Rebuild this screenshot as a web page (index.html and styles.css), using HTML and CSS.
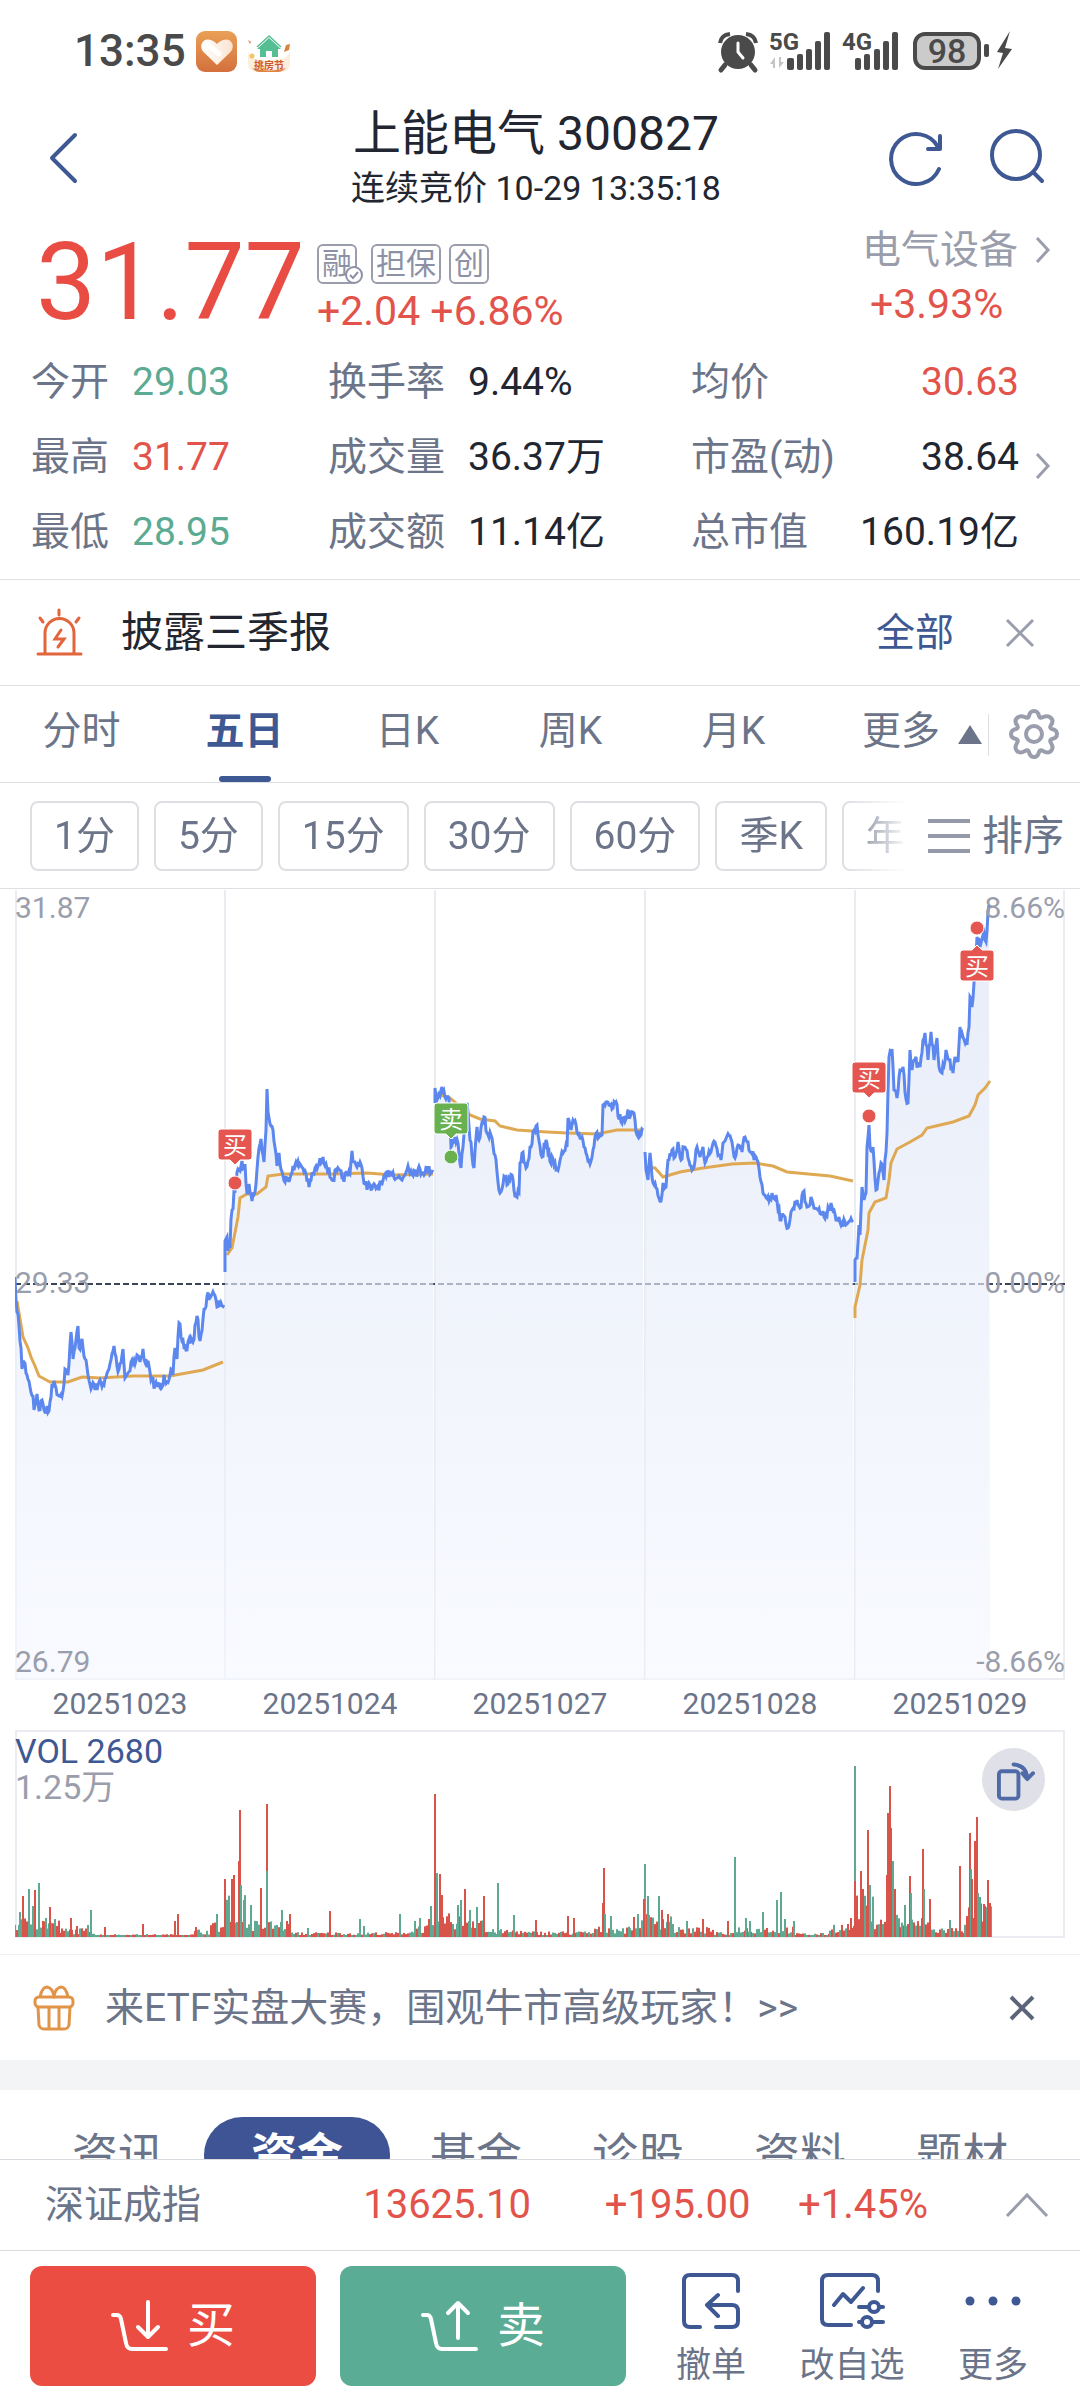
FILE: index.html
```html
<!DOCTYPE html>
<html lang="zh-CN">
<head>
    <meta charset="UTF-8">
    <meta name="viewport" content="width=device-width, initial-scale=1.0">
    <title>上能电气 300827</title>
    <link rel="stylesheet" href="styles.css">
</head>
<body>
    <!-- 状态栏 -->
    <div class="status-bar">
        <span class="clock">13:35</span>
        <svg class="app-icon" viewBox="0 0 42 42">
            <defs>
                <linearGradient id="orange" x1="0" y1="0" x2="0" y2="1">
                    <stop offset="0" stop-color="#e9a055"/>
                    <stop offset="1" stop-color="#d4703d"/>
                </linearGradient>
                <linearGradient id="heart" x1="0" y1="0" x2="1" y2="0">
                    <stop offset="0" stop-color="#fff"/>
                    <stop offset="1" stop-color="#fbe3cf"/>
                </linearGradient>
            </defs>
            <rect x="0" y="1" width="41" height="41" rx="9" fill="url(#orange)"/>
            <path d="M21 35 L7.500 22 C3 17 5.500 9.500 12 9.500 C16 9.500 19 12 21 14 C23 12 26 9.500 30 9.500 C36.500 9.500 39 17 34.500 22 Z" fill="url(#heart)"/>
            <path d="M11 14 L23 24" stroke="#fff" stroke-width="5" stroke-linecap="round"/>
        </svg>
        <svg class="app-icon house" viewBox="0 0 42 42">
            <path d="M0 22 Q3 29 12 30 L31 30 Q40 28 42 20 L42 33 Q42 42 32 42 L10 42 Q0 42 0 33 Z" fill="#fbeedd"/>
            <path d="M4 38 Q21 43 38 38 Q34 42 30 42 L11 42 Q8 42 4 38 Z" fill="#df8543"/>
            <path d="M21 8 L33 19 L30 19 L30 27 L24 27 L24 21 L18 21 L18 27 L12 27 L12 19 L9 19 Z" fill="#55bf93"/>
            <path d="M9 17 L21 6 L33 17" fill="none" stroke="#55bf93" stroke-width="1.500"/>
            <path d="M36 22 L38 15 L42 14 L41 20 Z" fill="#d8833e"/>
            <path d="M0 10 L3 12 L2 14 Z" fill="#e07b51"/>
            <circle cx="4" cy="26" r="2.500" fill="#f2c568"/>
            <text x="21" y="39" text-anchor="middle" class="house-text">挑房节</text>
        </svg>
        <svg class="status-icons" viewBox="0 0 300 46" fill="#4a4a4a">
            <!-- 闹钟 -->
            <circle cx="22" cy="24" r="17"/>
            <path d="M9 37 L5 42 M35 37 L39 42" stroke="#4a4a4a" stroke-width="5" stroke-linecap="round"/>
            <path d="M4 15 Q5 7 14 6 M40 15 Q39 7 30 6" stroke="#4a4a4a" stroke-width="4" fill="none"/>
            <path d="M22 15 L22 24 L27 30" stroke="#fff" stroke-width="3" fill="none" stroke-linecap="round"/>
            <!-- 信号 -->
            <text x="53" y="22" class="net">5G</text>
            <path d="M54 36 L59 29 L59 40 L57 40 L57 36 Z M68 34 L63 40 L63 29 L65 29 L65 34 Z" fill="#c4c4c4"/>
            <rect x="71" y="30" width="7" height="12" rx="2"/>
            <rect x="81" y="26" width="6" height="16" rx="2"/>
            <rect x="90" y="21" width="6" height="21" rx="2"/>
            <rect x="99" y="13" width="6" height="29" rx="2"/>
            <rect x="108" y="4" width="6" height="38" rx="2"/>
            <text x="126" y="22" class="net">4G</text>
            <rect x="139" y="30" width="6" height="12" rx="2"/>
            <rect x="148" y="26" width="6" height="16" rx="2"/>
            <rect x="158" y="21" width="6" height="21" rx="2"/>
            <rect x="167" y="13" width="6" height="29" rx="2"/>
            <rect x="176" y="4" width="6" height="38" rx="2"/>
            <!-- 电池 -->
            <rect x="199" y="6" width="64" height="34" rx="10" fill="#cbcbcb" stroke="#4a4a4a" stroke-width="4"/>
            <rect x="268" y="16" width="5" height="13" rx="2"/>
            <text x="231" y="35" text-anchor="middle" class="battery">98</text>
            <path d="M294 3 L281 24 L287 25 L282 41 L296 21 L289 20 Z"/>
        </svg>
    </div>

    <!-- 标题 -->
    <header class="header">
        <button class="icon-btn" aria-label="返回">
            <svg width="30" height="52" viewBox="0 0 30 52" class="line-blue" stroke-width="4"><path d="M27 3 L4 26 L27 49"/></svg>
        </button>
        <div class="title">
            <h1>上能电气 300827</h1>
            <p>连续竞价 10-29 13:35:18</p>
        </div>
        <div class="header-actions">
            <button class="icon-btn" aria-label="刷新">
                <svg width="56" height="58" viewBox="0 0 56 58" class="line-blue" stroke-width="4"><path d="M51 40 A25 25 0 1 1 50 18 M52 7 L52 20 L40 20"/></svg>
            </button>
            <button class="icon-btn" aria-label="搜索">
                <svg width="58" height="60" viewBox="0 0 58 60" class="line-blue" stroke-width="4"><circle cx="28" cy="27" r="24"/><path d="M46 45 L54 53"/></svg>
            </button>
        </div>
    </header>

    <main class="content">
        <!-- 行情 -->
        <section class="quote">
            <div class="price">31.77</div>
            <div class="change">
                <div class="tags">
                    <span class="tag">融<svg class="tag-check" viewBox="0 0 18 18"><circle cx="9" cy="9" r="8" fill="#fff" stroke="#8d91a5" stroke-width="2"/><path d="M5 9 L8 12 L13 6" fill="none" stroke="#8d91a5" stroke-width="2"/></svg></span>
                    <span class="tag">担保</span>
                    <span class="tag">创</span>
                </div>
                <div class="rate red">+2.04 +6.86%</div>
            </div>
            <a class="sector" href="#">
                <span class="sector-name">电气设备</span>
                <svg class="chevron" width="18" height="30" viewBox="0 0 18 30"><path d="M3 3 L14 15 L3 27"/></svg>
                <span class="sector-rate rate red">+3.93%</span>
            </a>
        </section>

        <section class="stats-wrap">
            <dl class="stats">
                <div><dt>今开</dt><dd class="green">29.03</dd></div>
                <div class="wide"><dt>换手率</dt><dd>9.44%</dd></div>
                <div class="spread"><dt>均价</dt><dd class="red">30.63</dd></div>
                <div><dt>最高</dt><dd class="red">31.77</dd></div>
                <div class="wide"><dt>成交量</dt><dd>36.37万</dd></div>
                <div class="spread"><dt>市盈(动)</dt><dd>38.64</dd></div>
                <div><dt>最低</dt><dd class="green">28.95</dd></div>
                <div class="wide"><dt>成交额</dt><dd>11.14亿</dd></div>
                <div class="spread"><dt>总市值</dt><dd>160.19亿</dd></div>
            </dl>
            <svg class="chevron" width="18" height="30" viewBox="0 0 18 30"><path d="M3 3 L14 15 L3 27"/></svg>
        </section>

        <!-- 公告 -->
        <section class="notice">
            <svg width="48" height="50" viewBox="0 0 48 50" fill="none" stroke="#e2653c" stroke-width="3" stroke-linecap="round">
                <path d="M2 46 L45 46 M9 45 L9 25 A14.500 14.500 0 0 1 38 25 L38 45 M23 2 L23 7 M4 10 L7 14 M43 10 L40 14"/>
                <path d="M25 22 L19 31 L28 31 L22 39"/>
            </svg>
            <span class="notice-text">披露三季报</span>
            <a href="#" class="all">全部</a>
            <button class="icon-btn" aria-label="关闭公告">
                <svg width="32" height="32" viewBox="0 0 32 32" fill="none" stroke="#9a9eac" stroke-width="3"><path d="M3 3 L29 29 M29 3 L3 29"/></svg>
            </button>
        </section>

        <!-- 周期 -->
        <nav class="period">
            <button>分时</button>
            <button class="active">五日</button>
            <button>日K</button>
            <button>周K</button>
            <button>月K</button>
            <button class="more">更多<span class="triangle"></span></button>
            <button class="gear" aria-label="设置">
                <svg width="52" height="52" viewBox="0 0 52 52" fill="none" stroke="#9a9eac" stroke-width="4" stroke-linejoin="round">
                    <path d="M21 8 Q22 3 26 3 Q30 3 31 8 Q32 11 35 9 Q40 7 43 10 Q46 13 43 17 Q41 20 44 21 Q49 22 49 26 Q49 30 44 31 Q41 32 43 35 Q46 40 43 43 Q40 46 35 43 Q32 41 31 44 Q30 49 26 49 Q22 49 21 44 Q20 41 17 43 Q12 46 9 43 Q6 40 9 35 Q11 32 8 31 Q3 30 3 26 Q3 22 8 21 Q11 20 9 17 Q6 13 9 10 Q12 7 17 9 Q20 11 21 8 Z"/>
                    <circle cx="26" cy="26" r="8"/>
                </svg>
            </button>
        </nav>

        <div class="minutes">
            <div class="chips">
                <button>1分</button>
                <button>5分</button>
                <button>15分</button>
                <button>30分</button>
                <button>60分</button>
                <button>季K</button>
                <button>年K</button>
            </div>
            <button class="sort"><span class="bars"></span>排序</button>
        </div>

        <!-- 走势图 -->
        <section class="charts">
            <div class="chart">
                <svg id="priceChart" viewBox="0 0 1050 790" preserveAspectRatio="none">
                    <defs>
                        <linearGradient id="area" gradientUnits="userSpaceOnUse" x1="0" y1="0" x2="0" y2="790">
                            <stop offset="0" stop-color="#dbe2f4"/>
                            <stop offset="1" stop-color="#f5f8ff"/>
                        </linearGradient>
                    </defs>
                    <path class="grid" d="M1 0 V789 H1049 V0 M210 0 V789 M420 0 V789 M630 0 V789 M840 0 V789"/>
                    <path class="zero" d="M0 394 H1050"/>
                    <g id="lines"></g>
                    <g class="mark buy">
                        <path d="M206 239 H234 Q237 239 237 242 V267 Q237 270 234 270 H225 L220 275 L215 270 H206 Q203 270 203 267 V242 Q203 239 206 239 Z"/>
                        <circle cx="220" cy="293" r="7"/>
                        <text x="220" y="264">买</text>
                    </g>
                    <g class="mark sell">
                        <path d="M422 213 H450 Q453 213 453 216 V241 Q453 244 450 244 H441 L436 249 L431 244 H422 Q419 244 419 241 V216 Q419 213 422 213 Z"/>
                        <circle cx="436" cy="267" r="7"/>
                        <text x="436" y="238">卖</text>
                    </g>
                    <g class="mark buy">
                        <path d="M840 172 H868 Q871 172 871 175 V200 Q871 203 868 203 H859 L854 208 L849 203 H840 Q837 203 837 200 V175 Q837 172 840 172 Z"/>
                        <circle cx="854" cy="226" r="7"/>
                        <text x="854" y="197">买</text>
                    </g>
                    <g class="mark buy">
                        <path d="M948 60 H957 L962 55 L967 60 H976 Q979 60 979 63 V88 Q979 91 976 91 H948 Q945 91 945 88 V63 Q945 60 948 60 Z"/>
                        <circle cx="962" cy="38" r="7"/>
                        <text x="962" y="85">买</text>
                    </g>
                </svg>
                <span class="axis top left">31.87</span>
                <span class="axis top right">8.66%</span>
                <span class="axis mid left">29.33</span>
                <span class="axis mid right">0.00%</span>
                <span class="axis bottom left">26.79</span>
                <span class="axis bottom right">-8.66%</span>
            </div>
            <div class="dates">
                <span>20251023</span>
                <span>20251024</span>
                <span>20251027</span>
                <span>20251028</span>
                <span>20251029</span>
            </div>
            <div class="volume">
                <svg id="volumeChart" viewBox="0 0 1050 208" preserveAspectRatio="none">
                    <path class="grid" d="M1 1 H1049 V207 H1 Z"/>
                </svg>
                <div class="vol-label"><span class="blue">VOL 2680</span><br>1.25万</div>
                <button class="rotate" aria-label="横屏">
                    <svg width="40" height="42" viewBox="0 0 40 42" fill="none" stroke="#4f6aa6" stroke-width="4" stroke-linecap="round" stroke-linejoin="round">
                        <rect x="3" y="10" width="20" height="28" rx="3"/>
                        <path d="M18 3 Q31 4 32 17 M27 12 L32 18 L38 12"/>
                    </svg>
                </button>
            </div>
        </section>

        <!-- 活动 -->
        <section class="promo">
            <svg width="42" height="46" viewBox="0 0 42 46" fill="none" stroke="#e19447" stroke-width="3" stroke-linejoin="round">
                <rect x="2" y="12" width="38" height="10" rx="4"/>
                <path d="M5 22 L6 40 Q7 44 11 44 L31 44 Q35 44 36 40 L37 22 M16 23 V43 M26 23 V43 M7 12 Q9 2 14 2 Q20 3 21 12 Q22 3 28 2 Q33 2 35 12"/>
            </svg>
            <a href="#" class="promo-text">来ETF实盘大赛，围观牛市高级玩家！&gt;&gt;</a>
            <button class="icon-btn" aria-label="关闭活动">
                <svg width="28" height="28" viewBox="0 0 28 28" fill="none" stroke="#5b6478" stroke-width="4"><path d="M3 3 L25 25 M25 3 L3 25"/></svg>
            </button>
        </section>

        <nav class="info-tabs">
            <button>资讯</button>
            <button class="active">资金</button>
            <button>基金</button>
            <button>诊股</button>
            <button>资料</button>
            <button>题材</button>
        </nav>
    </main>

    <footer class="footer">
        <div class="index-row">
            <span class="index-name">深证成指</span>
            <span class="red index-value">13625.10</span>
            <span class="red index-change">+195.00</span>
            <span class="red index-rate">+1.45%</span>
            <svg class="chevron" width="44" height="26" viewBox="0 0 44 26"><path d="M2 24 L22 3 L42 24"/></svg>
        </div>
        <div class="actions">
            <button class="trade trade-buy">
                <svg width="58" height="54" viewBox="0 0 58 54"><path d="M2 16 H6 Q9 16 10 20 L15 44 Q16 50 21 50 H55 M37 3 V37 M27 28 L37 38 L47 28"/></svg>买
            </button>
            <button class="trade trade-sell">
                <svg width="58" height="54" viewBox="0 0 58 54"><path d="M2 16 H6 Q9 16 10 20 L15 44 Q16 50 21 50 H55 M37 39 V4 M27 14 L37 4 L47 14"/></svg>卖
            </button>
            <button class="tool">
                <svg width="60" height="60" viewBox="0 0 60 60" class="line-blue" stroke-width="4"><path d="M19 57 H9 Q3 57 3 51 V11 Q3 5 9 5 H51 Q57 5 57 11 V21 M35 57 H51 Q57 57 57 51 V41 Q57 35 51 35 H26 M37 25 L26 35 L37 46"/></svg>
                撤单
            </button>
            <button class="tool tool-wide">
                <svg width="66" height="60" viewBox="0 0 66 60" class="line-blue" stroke-width="4"><path d="M32 55 H9 Q3 55 3 49 V11 Q3 5 9 5 H53 Q59 5 59 11 V21 M15 35 L24 24 L32 32 L44 18"/><path d="M40 37 H49 M60 37 H64 M40 52 H43 M54 52 H64"/><circle cx="55" cy="37" r="5"/><circle cx="48" cy="52" r="5"/></svg>
                改自选
            </button>
            <button class="tool">
                <svg width="60" height="60" viewBox="0 0 60 60" fill="#3e5894"><circle cx="7" cy="31" r="4.500"/><circle cx="30" cy="31" r="4.500"/><circle cx="53" cy="31" r="4.500"/></svg>
                更多
            </button>
        </div>
    </footer>

    <script src="script.js"></script>
</body>
</html>
```

FILE: styles.css
```css
* {
    box-sizing: border-box;
}
body {
    margin: 0;
    height: 100vh;
    display: flex;
    flex-direction: column;
    font-family: Roboto, "Noto Sans CJK SC", sans-serif;
    font-size: 39px;
    line-height: 48px;
    color: #222631;
    background-color: #fff;
}
button {
    padding: 0;
    border: none;
    background: none;
    font: inherit;
    color: #6b7488;
    white-space: nowrap;
    cursor: pointer;
}
a {
    color: inherit;
    text-decoration: none;
}
svg {
    display: block;
    flex: none;
}
.red {
    color: #e2544b;
}
.green {
    color: #5bab93;
}
.blue {
    color: #3e5894;
}
.rate {
    font-size: 41px;
}
.line-blue {
    fill: none;
    stroke: #3e5894;
    stroke-linecap: round;
    stroke-linejoin: round;
}
.chevron {
    fill: none;
    stroke: #9a9eac;
    stroke-width: 3;
}

/* 状态栏 */
.status-bar {
    display: flex;
    align-items: center;
    height: 102px;
    padding: 0 64px 0 74px;
    color: #4a4a4a;
}
.clock {
    font-size: 44px;
    font-weight: 500;
}
.app-icon {
    width: 42px;
    height: 42px;
    margin-left: 10px;
}
.house-text {
    font-size: 10px;
    font-weight: 700;
    fill: #cf5a30;
}
.status-icons {
    width: 300px;
    height: 46px;
    margin-left: auto;
}
.net {
    font-size: 24px;
    font-weight: 700;
}
.battery {
    font-size: 34px;
    font-weight: 500;
}

/* 标题 */
.header {
    display: flex;
    align-items: center;
    height: 116px;
    padding: 0 34px 4px 48px;
}
.title {
    flex: 1;
    padding-left: 106px;
    text-align: center;
}
.title h1 {
    margin: 0;
    font-size: 48px;
    font-weight: 400;
    line-height: 60px;
}
.title p {
    margin: 0;
    font-size: 34px;
    line-height: 48px;
}
.header-actions {
    display: flex;
    gap: 44px;
}

.content {
    flex: 1;
    min-height: 0;
    overflow-y: auto;
    scrollbar-width: none;
}

/* 行情 */
.quote {
    display: flex;
    height: 126px;
    padding: 0 28px 0 36px;
}
.price {
    width: 281px;
    font-size: 107px;
    line-height: 130px;
    color: #e84c43;
}
.change {
    padding-top: 26px;
}
.tags {
    display: flex;
    gap: 8px;
    margin-bottom: 3px;
}
.tag {
    position: relative;
    height: 40px;
    padding: 0 3px;
    border: 2px solid #9a9eac;
    border-radius: 6px;
    font-size: 30px;
    line-height: 36px;
    color: #8d91a5;
}
.tag:first-child {
    margin-right: 6px;
}
.tag-check {
    position: absolute;
    right: -8px;
    bottom: -2px;
    width: 18px;
    height: 18px;
}
.sector {
    display: grid;
    grid-template-columns: auto 18px;
    column-gap: 16px;
    align-content: start;
    align-items: center;
    margin-left: auto;
    padding-top: 8px;
    color: #9a9eac;
}
.sector-rate {
    padding-left: 8px;
    margin-top: 6px;
}

.stats-wrap {
    display: flex;
    align-items: center;
    padding: 0 28px 10px 31px;
    border-bottom: 1px solid #dddfe3;
}
.stats {
    flex: 1;
    display: grid;
    grid-template-columns: 297fr 363fr 328fr;
    grid-auto-rows: 75px;
    margin: 0 15px 0 0;
}
.stats div {
    display: flex;
    align-items: center;
    white-space: nowrap;
}
.stats dt {
    width: 101px;
    color: #6b7488;
}
.stats .wide dt {
    width: 140px;
}
.stats .spread {
    justify-content: space-between;
}
.stats .spread dt {
    width: auto;
}
.stats dd {
    margin: 0;
}
.stats-wrap .chevron {
    margin-top: 18px;
}

/* 公告 */
.notice {
    display: flex;
    align-items: center;
    height: 106px;
    padding: 0 44px 0 36px;
    border-bottom: 1px solid #dddfe3;
}
.notice-text {
    flex: 1;
    padding-left: 37px;
    font-size: 42px;
}
.all {
    margin-right: 50px;
    color: #3e5894;
}

/* 周期 */
.period {
    display: flex;
    height: 97px;
    border-bottom: 1px solid #dddfe3;
}
.period button {
    position: relative;
    flex: 163;
    padding-bottom: 6px;
}
.period .active {
    font-weight: 700;
    color: #3e5894;
}
.period .active::after {
    content: "";
    position: absolute;
    left: calc(50% - 26px);
    bottom: 0;
    width: 52px;
    height: 6px;
    border-radius: 3px;
    background-color: #3e5894;
}
.period .more {
    flex: 167;
    display: flex;
    align-items: center;
    justify-content: flex-end;
    gap: 18px;
    padding-right: 6px;
}
.triangle {
    margin-top: 6px;
    border: 12px solid transparent;
    border-top: none;
    border-bottom: 19px solid #6b7488;
}
.period .gear {
    flex: 92;
    display: flex;
    align-items: center;
    justify-content: center;
    padding: 0;
}
.gear::before {
    content: "";
    position: absolute;
    left: 0;
    top: 28px;
    width: 1px;
    height: 42px;
    background-color: #dddfe3;
}

.minutes {
    display: flex;
    align-items: center;
    height: 106px;
    padding: 0 16px 0 30px;
    border-bottom: 1px solid #dddfe3;
}
.chips {
    flex: 1;
    min-width: 0;
    display: flex;
    gap: 15px;
    overflow: hidden;
    -webkit-mask-image: linear-gradient(to right, #000 calc(100% - 64px), transparent);
    mask-image: linear-gradient(to right, #000 calc(100% - 64px), transparent);
}
.chips button {
    flex: none;
    height: 70px;
    padding: 0 22px;
    border: 2px solid #dddfe3;
    border-radius: 8px;
}
.sort {
    display: flex;
    align-items: center;
    gap: 12px;
    margin-left: 20px;
    font-size: 41px;
}
.bars {
    width: 42px;
    height: 34px;
    border-top: 4px solid #959aa8;
    border-bottom: 4px solid #959aa8;
    background: linear-gradient(#959aa8, #959aa8) center / 100% 4px no-repeat;
}

/* 走势图 */
.charts {
    padding: 1px 15px 16px;
}
.chart, .volume {
    position: relative;
}
.chart svg:first-child, .volume svg:first-child {
    width: 100%;
}
#priceChart {
    height: 790px;
}
#volumeChart {
    height: 208px;
}
.grid {
    fill: none;
    stroke: #eaecf1;
    stroke-width: 2;
}
.zero {
    stroke: #3b4658;
    stroke-width: 2;
    stroke-dasharray: 6 3;
}
.area {
    fill: url(#area);
    fill-opacity: 0.65;
}
.line {
    fill: none;
    stroke: #5b87ee;
    stroke-width: 3;
}
.avg {
    fill: none;
    stroke: #dfa954;
    stroke-width: 3;
}
.mark path, .mark circle {
    stroke: #fff;
    stroke-width: 1;
}
.mark.buy {
    fill: #e4564f;
}
.mark.sell {
    fill: #69b14f;
}
.mark text {
    font-size: 24px;
    text-anchor: middle;
    fill: #fff;
}
.axis {
    position: absolute;
    font-size: 30px;
    line-height: 36px;
    color: #9a9eac;
}
.left {
    left: 0;
}
.right {
    right: 0;
}
.top {
    top: 0;
}
.mid {
    top: 375px;
}
.bottom {
    bottom: 0;
}
.dates {
    display: flex;
    height: 50px;
    font-size: 30px;
    line-height: 48px;
    color: #6b7488;
}
.dates span {
    flex: 1;
    text-align: center;
}
.vol-label {
    position: absolute;
    left: 0;
    top: 3px;
    font-size: 34px;
    line-height: 36px;
    color: #9a9eac;
}
.rotate {
    position: absolute;
    right: 20px;
    top: 18px;
    width: 63px;
    height: 63px;
    padding: 4px 10px 0 14px;
    border-radius: 50%;
    background-color: #dfe0e8;
}

/* 活动 */
.promo {
    display: flex;
    align-items: center;
    height: 106px;
    padding: 0 44px 0 33px;
    border-top: 1px solid #eff0f2;
}
.promo-text {
    flex: 1;
    padding-left: 30px;
    color: #6b7488;
}

.info-tabs {
    display: flex;
    justify-content: center;
    padding: 27px 0;
    border-top: 30px solid #f3f4f6;
}
.info-tabs button {
    height: 76px;
    padding: 0 35px;
    font-size: 46px;
}
.info-tabs .active {
    margin: 0 5px;
    padding: 0 47px;
    border-radius: 38px;
    font-weight: 700;
    color: #fff;
    background-color: #3e5494;
}

/* 底部 */
.footer {
    border-top: 1px solid #d9dbe0;
    background-color: #fff;
}
.index-row {
    display: flex;
    align-items: center;
    height: 91px;
    padding: 0 31px 0 45px;
    border-bottom: 1px solid #d9dbe0;
    color: #6b7488;
}
.index-name {
    flex: none;
}
.index-row .red {
    font-size: 40px;
    text-align: right;
}
.index-value {
    flex: 331;
}
.index-change {
    flex: 220;
}
.index-rate {
    flex: 178;
}
.index-row .chevron {
    margin-left: 77px;
}
.actions {
    display: flex;
    align-items: flex-start;
    height: 149px;
    padding: 15px 26px 0 30px;
}
.trade {
    flex: 1;
    display: flex;
    align-items: center;
    justify-content: center;
    gap: 18px;
    height: 120px;
    margin-right: 24px;
    border-radius: 12px;
    font-size: 48px;
    color: #fff;
}
.trade svg {
    fill: none;
    stroke: #fff;
    stroke-width: 4;
    stroke-linecap: round;
    stroke-linejoin: round;
}
.trade-buy {
    background-color: #eb4d43;
}
.trade-sell {
    background-color: #5aac94;
}
.tool {
    display: flex;
    flex-direction: column;
    align-items: center;
    width: 122px;
    padding-top: 4px;
    font-size: 35px;
}
.tool svg {
    margin-bottom: 12px;
}
.tool-wide {
    width: 160px;
}
```

FILE: script.js
```js
const NS = 'http://www.w3.org/2000/svg';
const BASE = 790;

// 每日分时: [x, y] 依次排列
const days = [
    {
        line: [0,387, 1,410, 2,422, 4,436, 6,458, 7,479, 9,472, 12,485, 15,497, 18,506, 19,520, 22,504, 24,520, 27,510, 29,520, 34,521, 37,494, 40,495, 44,506, 48,501, 50,479, 53,485, 56,442, 58,469, 60,458, 63,436, 64,458, 67,449, 70,469, 73,485, 76,499, 79,494, 82,500, 85,490, 89,495, 94,479, 96,470, 99,456, 102,476, 104,479, 108,459, 110,488, 113,483, 117,470, 120,474, 122,465, 125,472, 128,459, 130,472, 134,476, 136,490, 140,495, 147,497, 149,485, 152,492, 156,479, 158,485, 160,458, 162,469, 164,433, 167,451, 172,460, 174,449, 178,452, 182,426, 185,451, 188,429, 190,419, 192,406, 197,404, 199,404, 202,417, 206,413, 209,415],
        avg: [2,411, 8,447, 13,458, 16,467, 20,476, 24,486, 35,492, 53,492, 67,487, 85,488, 118,486, 155,486, 188,480, 208,472]
    },
    {
        line: [210,382, 210,351, 212,347, 213,361, 215,358, 216,329, 218,319, 219,301, 221,293, 223,279, 226,276, 230,274, 232,303, 234,294, 237,311, 241,294, 243,267, 246,249, 249,272, 251,240, 252,199, 253,222, 256,236, 258,240, 262,276, 264,263, 268,286, 274,292, 278,276, 285,274, 290,281, 294,297, 298,283, 303,276, 308,267, 311,274, 317,290, 322,281, 328,288, 335,283, 337,261, 339,272, 347,278, 350,294, 357,299, 367,294, 375,281, 387,290, 393,276, 396,281, 418,280],
        avg: [212,365, 217,358, 223,327, 225,308, 232,304, 242,304, 251,297, 253,286, 268,284, 318,284, 352,283, 378,285, 418,284]
    },
    {
        line: [420,213, 420,198, 422,210, 427,197, 430,207, 434,208, 436,257, 440,247, 443,253, 446,278, 448,257, 452,213, 455,250, 459,278, 462,237, 464,250, 469,227, 472,243, 477,248, 481,270, 483,292, 485,303, 490,287, 492,295, 497,285, 500,306, 504,302, 505,273, 507,263, 511,278, 516,257, 518,242, 522,235, 527,267, 531,250, 533,263, 539,275, 544,276, 548,263, 552,257, 553,228, 556,240, 559,232, 562,242, 567,247, 571,263, 576,271, 580,247, 587,245, 588,215, 598,218, 600,213, 606,232, 612,225, 618,222, 622,245, 628,240],
        avg: [420,203, 435,208, 455,225, 465,229, 480,231, 485,236, 502,240, 532,242, 552,243, 582,244, 602,240, 627,240]
    },
    {
        line: [630,262, 631,280, 633,290, 635,263, 637,287, 640,293, 646,311, 648,293, 651,297, 653,270, 657,260, 660,267, 663,252, 666,270, 669,257, 673,268, 678,279, 682,257, 685,267, 688,257, 690,273, 697,257, 700,252, 706,270, 708,253, 712,246, 717,252, 720,268, 723,255, 727,262, 730,247, 735,262, 742,270, 745,287, 748,303, 755,308, 761,305, 766,330, 770,327, 773,338, 777,320, 782,310, 785,318, 788,302, 792,317, 797,310, 803,320, 809,327, 816,313, 821,330, 827,333, 832,334, 838,332],
        avg: [632,277, 640,278, 648,287, 665,282, 688,278, 717,274, 740,273, 758,276, 772,282, 815,286, 838,291]
    },
    {
        line: [840,392, 840,370, 842,368, 844,335, 845,345, 847,297, 849,310, 851,303, 852,257, 854,235, 855,257, 858,257, 861,300, 866,273, 869,290, 872,243, 874,167, 877,159, 879,200, 882,208, 885,180, 888,177, 890,202, 893,213, 895,160, 897,180, 900,170, 905,177, 908,150, 910,143, 913,170, 916,142, 919,170, 922,148, 924,177, 927,183, 931,160, 934,170, 938,183, 940,167, 943,172, 945,137, 948,147, 952,155, 954,137, 955,107, 957,117, 959,93, 962,47, 965,57, 968,45, 971,52, 973,23, 974,15],
        avg: [840,428, 840,417, 845,395, 847,370, 853,340, 854,323, 860,312, 871,308, 874,290, 876,273, 882,259, 895,252, 907,245, 912,238, 938,232, 954,226, 960,215, 963,205, 970,198, 975,191]
    }
];

// 成交量普通水平: [起点, 终点, 高度]
const levels = [
    [0, 45, 20], [45, 80, 9], [80, 180, 3], [180, 196, 8], [196, 210, 15],
    [210, 232, 46], [232, 275, 17], [275, 385, 5], [385, 400, 7], [400, 420, 12],
    [420, 432, 24], [432, 470, 24], [470, 510, 8], [510, 580, 6], [580, 615, 11], [615, 630, 20],
    [630, 660, 24], [660, 700, 10], [700, 720, 5], [720, 780, 11], [780, 815, 4], [815, 840, 14],
    [840, 860, 42], [860, 885, 26], [885, 915, 20], [915, 950, 10], [950, 977, 34]
];

// 放量: x, 高度, 1 涨 0 跌
const spikes = [
    5,25,0, 8,41,1, 14,48,0, 18,31,0, 20,47,1, 24,54,0, 31,19,0, 35,30,1, 56,19,1, 62,11,1, 73,12,0, 76,27,0,
    90,10,1, 128,13,1, 160,16,1, 163,23,1, 181,10,1, 202,23,0,
    210,58,1, 217,58,1, 219,62,1, 224,76,1, 225,127,1, 226,52,0, 229,37,0, 236,32,0, 246,49,1, 252,133,1, 252,66,0,
    267,27,0, 275,23,1, 293,9,0, 315,26,1, 345,18,0, 349,11,0, 385,23,0, 400,16,0, 405,19,0, 414,18,1, 416,31,0,
    420,143,1, 422,64,0, 425,63,1, 427,42,1, 443,32,0, 446,37,0, 450,48,1, 455,27,0, 462,30,0, 469,41,1, 483,54,0,
    499,22,0, 521,17,1, 553,21,1, 559,19,1, 588,34,1, 589,69,1, 590,23,0, 596,21,0, 623,23,0,
    630,73,0, 629,38,1, 633,41,0, 644,41,0, 647,27,1, 653,23,1, 672,16,0, 688,18,1, 713,16,1, 720,80,0, 731,19,0,
    735,16,0, 748,25,0, 762,37,0, 766,45,0, 770,18,0, 779,16,0, 836,19,1,
    840,171,0, 840,56,1, 846,66,1, 848,48,1, 853,107,1, 855,52,0, 872,62,1, 873,124,1, 875,151,1, 876,109,1, 878,76,0,
    880,48,1, 890,32,0, 895,61,1, 896,44,0, 908,88,1, 909,48,0, 915,38,1, 935,17,0, 945,71,1, 955,104,1, 956,68,0,
    957,58,1, 960,96,1, 962,120,1, 963,44,0, 965,40,0, 969,33,1, 973,57,1, 975,34,1
];

// 固定种子, 每次刷新结果一致
let seed = 7;
function random() {
    seed = (seed * 16807) % 2147483647;
    return seed / 2147483647;
}

function add(parent, d, className) {
    const path = document.createElementNS(NS, 'path');
    path.setAttribute('d', d);
    path.setAttribute('class', className);
    parent.appendChild(path);
}

function toPath(points, noise) {
    let d = `M${points[0]} ${points[1]}`;
    for (let i = 2; i < points.length; i += 2) {
        const x0 = points[i - 2], y0 = points[i - 1];
        const dx = points[i] - x0, dy = points[i + 1] - y0;
        for (let k = 1; k < dx && noise; k++) {
            const y = y0 + dy * k / dx + (random() - 0.5) * noise;
            d += ` L${x0 + k} ${y.toFixed(1)}`;
        }
        d += ` L${points[i]} ${points[i + 1]}`;
    }
    return d;
}

const lines = document.getElementById('lines');
days.forEach(day => {
    const d = toPath(day.line, 10);
    const first = day.line[0];
    const last = day.line[day.line.length - 2];
    add(lines, `${d} L${last + 1} ${BASE} L${first} ${BASE} Z`, 'area');
    add(lines, toPath(day.avg, 0), 'avg');
    add(lines, d, 'line');
});

const volume = document.getElementById('volumeChart');
function bar(x, h, up) {
    const rect = document.createElementNS(NS, 'rect');
    rect.setAttribute('x', x - 1);
    rect.setAttribute('y', 207 - h);
    rect.setAttribute('width', 2);
    rect.setAttribute('height', h);
    rect.setAttribute('fill', up ? '#d8534a' : '#5fa892');
    volume.appendChild(rect);
}
levels.forEach(([from, to, height]) => {
    for (let x = from; x < to; x += 2) {
        bar(x, Math.max(2, height * (0.3 + random() * 0.7)), random() > 0.45);
    }
});
for (let i = 0; i < spikes.length; i += 3) {
    bar(spikes[i], spikes[i + 1], spikes[i + 2]);
}
```
